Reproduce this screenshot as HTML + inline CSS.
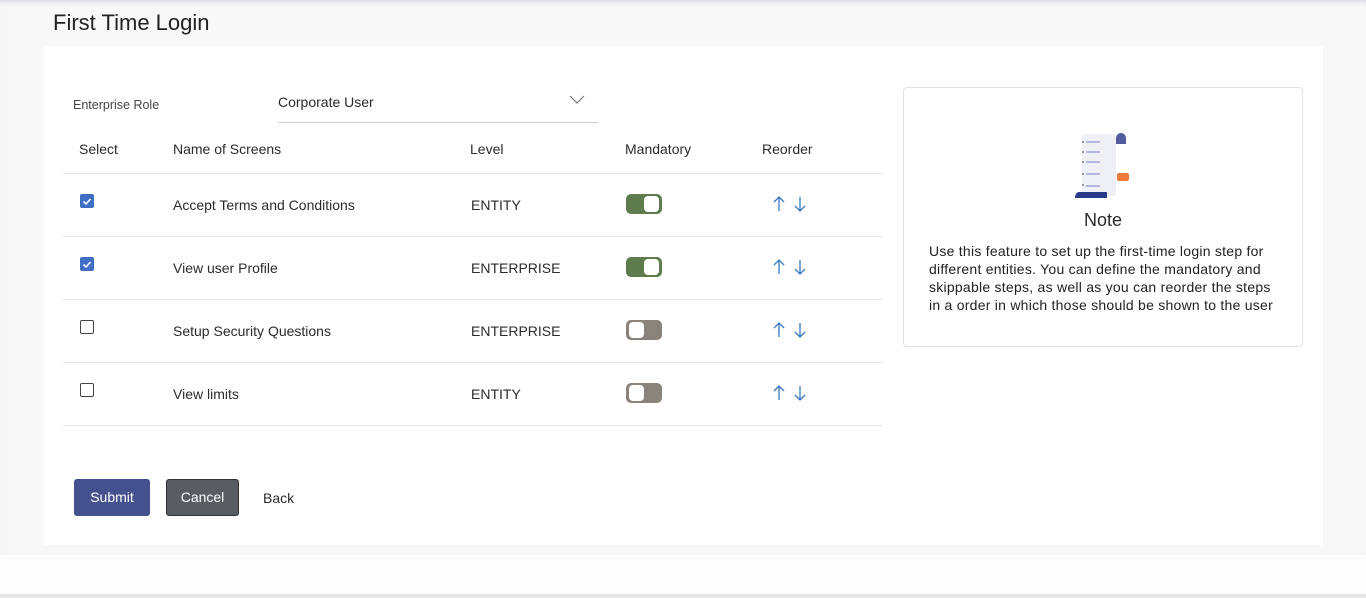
<!DOCTYPE html>
<html><head><meta charset="utf-8"><style>
*{margin:0;padding:0;box-sizing:border-box}
body{width:1366px;height:598px;background:#fdfdfd;font-family:"Liberation Sans",sans-serif;color:#2b2b2b;position:relative;overflow:hidden;font-size:14px}
.a{position:absolute}
.bg{left:0;top:0;width:1366px;height:555px;background:#f8f8f9;box-shadow:inset 0 6px 6px -4px #d8d8e4}
.panel{left:44px;top:46px;width:1279px;height:499px;background:#fff}
.line{height:1px;background:#e6e6e6}
.cb{width:14px;height:14px;border-radius:2px}
.on{background:#3e6fc4}
.off{border:1.5px solid #444;background:#fff}
.tg{width:36px;height:20px;border-radius:5px;}
.tg i{position:absolute;top:2px;width:15px;height:16px;background:#fff;border-radius:4px}
.btn{height:37px;border-radius:3px;color:#fff;font-size:14px;text-align:center;line-height:37px}
</style></head><body>
<div class="a bg"></div>
<div class="a" style="left:53px;top:10px;font-size:22px;color:#222">First Time Login</div>
<div class="a panel"></div>
<div class="a" style="left:73px;top:98px;font-size:12.5px;color:#444">Enterprise Role</div>
<div class="a" style="left:278px;top:94px;font-size:14px">Corporate User</div>
<svg class="a" style="left:569px;top:95px" width="16" height="10"><path d="M1 1l7 7 7-7" fill="none" stroke="#777" stroke-width="1.2"/></svg>
<div class="a line" style="left:278px;top:122px;width:320px;background:#ccc"></div>

<div class="a" style="left:79px;top:141px">Select</div>
<div class="a" style="left:173px;top:141px">Name of Screens</div>
<div class="a" style="left:470px;top:141px">Level</div>
<div class="a" style="left:625px;top:141px">Mandatory</div>
<div class="a" style="left:762px;top:141px">Reorder</div>
<div class="a line" style="left:63px;top:173px;width:820px"></div>

<svg width="0" height="0" style="position:absolute"><defs><g id="ar" fill="none" stroke="#3a78c4" stroke-width="1.3"><path d="M7 16V2M2 7l5-5 5 5"/><path d="M28 2v14M23 11l5 5 5-5"/></g></defs></svg>

<div class="a cb on" style="left:80px;top:194px"><svg width="14" height="14"><path d="M3.5 7.5l2.5 2.5 4.5-5" fill="none" stroke="#fff" stroke-width="1.6"/></svg></div>
<div class="a" style="left:173px;top:197px">Accept Terms and Conditions</div>
<div class="a" style="left:471px;top:197px">ENTITY</div>
<div class="a tg" style="left:626px;top:194px;background:#5e7c4e"><i style="left:18px"></i></div>
<svg class="a" style="left:772px;top:195px" width="36" height="18"><use href="#ar"/></svg>
<div class="a line" style="left:63px;top:236px;width:820px"></div>

<div class="a cb on" style="left:80px;top:257px"><svg width="14" height="14"><path d="M3.5 7.5l2.5 2.5 4.5-5" fill="none" stroke="#fff" stroke-width="1.6"/></svg></div>
<div class="a" style="left:173px;top:260px">View user Profile</div>
<div class="a" style="left:471px;top:260px">ENTERPRISE</div>
<div class="a tg" style="left:626px;top:257px;background:#5e7c4e"><i style="left:18px"></i></div>
<svg class="a" style="left:772px;top:258px" width="36" height="18"><use href="#ar"/></svg>
<div class="a line" style="left:63px;top:299px;width:820px"></div>

<div class="a cb off" style="left:80px;top:320px"></div>
<div class="a" style="left:173px;top:323px">Setup Security Questions</div>
<div class="a" style="left:471px;top:323px">ENTERPRISE</div>
<div class="a tg" style="left:626px;top:320px;background:#8a837c"><i style="left:3px"></i></div>
<svg class="a" style="left:772px;top:321px" width="36" height="18"><use href="#ar"/></svg>
<div class="a line" style="left:63px;top:362px;width:820px"></div>

<div class="a cb off" style="left:80px;top:383px"></div>
<div class="a" style="left:173px;top:386px">View limits</div>
<div class="a" style="left:471px;top:386px">ENTITY</div>
<div class="a tg" style="left:626px;top:383px;background:#8a837c"><i style="left:3px"></i></div>
<svg class="a" style="left:772px;top:384px" width="36" height="18"><use href="#ar"/></svg>
<div class="a line" style="left:63px;top:425px;width:820px"></div>

<div class="a" style="left:903px;top:87px;width:400px;height:260px;border:1px solid #e2e2e2;border-radius:4px;background:#fff"></div>
<svg class="a" style="left:1074px;top:132px" width="58" height="68">
<rect x="8" y="2" width="34" height="62" rx="4" fill="#eef0f6"/>
<path d="M42 12V6a5 5 0 0 1 10 0v6z" fill="#525aa0"/>
<g stroke="#8e95d8" stroke-width="1.2"><path d="M12 10h14M12 20h14M12 30h14M12 42h14M12 54h14"/></g>
<g fill="#333"><circle cx="9" cy="10" r=".8"/><circle cx="9" cy="20" r=".8"/><circle cx="9" cy="30" r=".8"/><circle cx="9" cy="42" r=".8"/><circle cx="9" cy="53" r=".8"/></g>
<rect x="43" y="41" width="12" height="8" rx="2" fill="#f07a3a"/>
<path d="M1 66c0-4 2-6 4-6h28v6z" fill="#263c8a"/>
</svg>
<div class="a" style="left:903px;top:210px;width:400px;text-align:center;font-size:18px">Note</div>
<div class="a" style="left:929px;top:242px;font-size:14px;letter-spacing:0.25px;line-height:18px;color:#222;white-space:nowrap">Use this feature to set up the first-time login step for<br>different entities. You can define the mandatory and<br>skippable steps, as well as you can reorder the steps<br>in a order in which those should be shown to the user</div>

<div class="a btn" style="left:74px;top:479px;width:76px;background:#45508f">Submit</div>
<div class="a btn" style="left:166px;top:479px;width:73px;background:#585c63;border:1px solid #333;line-height:35px">Cancel</div>
<div class="a" style="left:263px;top:490px">Back</div>
<div class="a" style="left:0;top:594px;width:1366px;height:4px;background:#e6e6e6"></div>
</body></html>
